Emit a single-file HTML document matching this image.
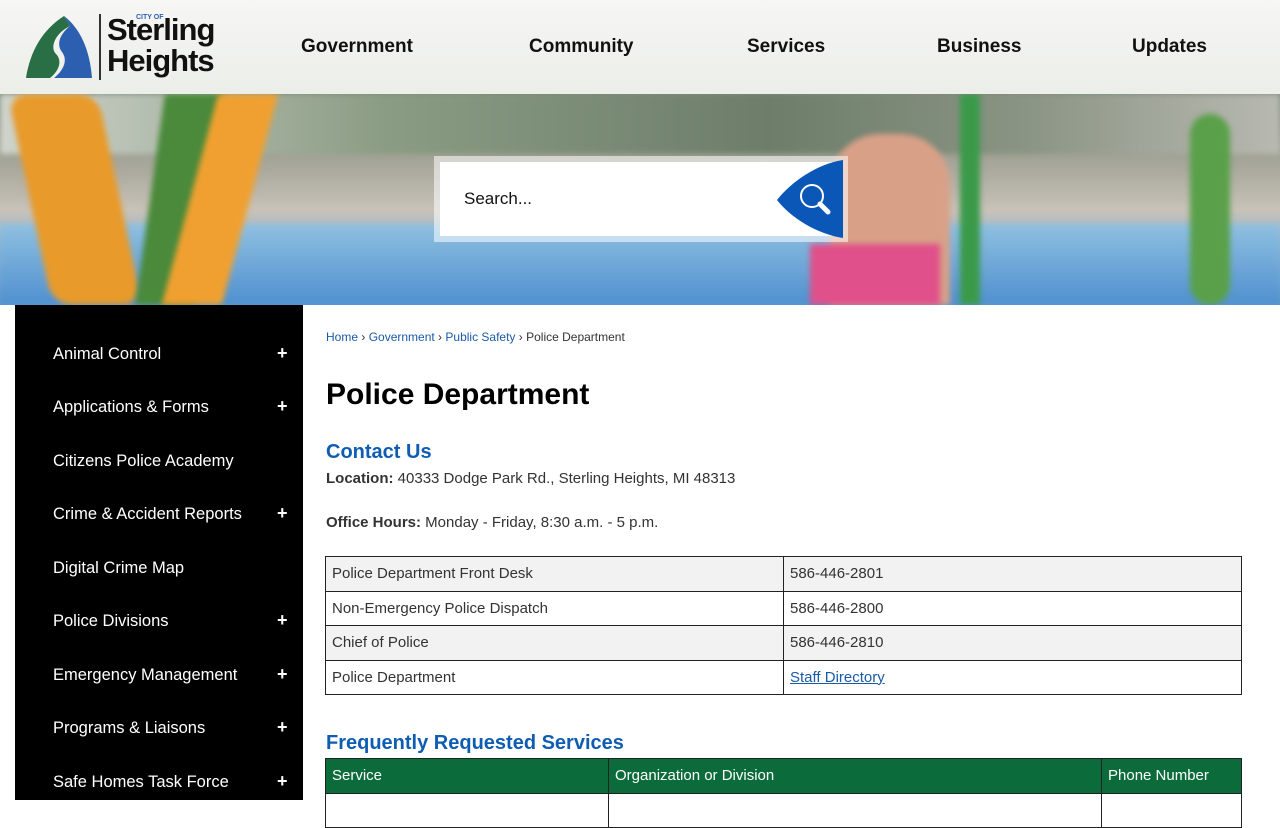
<!DOCTYPE html>
<html><head><meta charset="utf-8"><style>
*{margin:0;padding:0;box-sizing:border-box}
body{width:1280px;height:800px;overflow:hidden;background:#fff;font-family:"Liberation Sans",sans-serif;position:relative}
.hdr{position:absolute;top:0;left:0;width:1280px;height:94px;background:linear-gradient(180deg,#f6f6f4,#eceee9);z-index:3}
.nav a{position:absolute;top:36px;font-size:19px;font-weight:bold;color:#111;text-decoration:none}
.hero{position:absolute;top:94px;left:0;width:1280px;height:211px;overflow:hidden;
background:linear-gradient(180deg,#7f8a78 0%,#a9a89c 35%,#c8c2b8 55%,#8fb4d0 72%,#5d9ad0 100%)}
.hero .b{filter:blur(3px)}
.b{position:absolute}
.search{position:absolute;left:434px;top:156px;width:414px;height:86px;background:rgba(255,255,255,.55)}
.search .in{position:absolute;left:6px;top:6px;width:402px;height:74px;background:#fff}
.search span{position:absolute;left:24px;top:27px;font-size:17px;color:#111}
.side{position:absolute;left:15px;top:305px;width:288px;height:495px;background:#000}
.side div{position:absolute;left:38px;color:#fff;font-size:16.5px}
.side b{position:absolute;left:262px;color:#fff;font-size:18px;font-weight:bold}
.bc{position:absolute;top:330px;left:326px;font-size:12px;color:#333}
.bc a{color:#1a5aa8;text-decoration:none}
h1{position:absolute;top:378px;left:326px;font-size:30px;color:#000}
h2{position:absolute;left:326px;font-size:20px;color:#0f5db3}
.p{position:absolute;left:326px;font-size:15px;color:#333}
table{position:absolute;left:325px;border-collapse:collapse;font-size:15px;color:#333}
td{border:1px solid #222;padding:0 6px;height:34.5px}
tr.g td{background:#f2f2f2}
.t2 td{background:#0b6b3a;color:#fff;border-color:#222}
</style></head><body>
<div class="hero">
 <div class="b" style="left:0;top:0;width:1280px;height:60px;background:linear-gradient(90deg,#cfd4cc,#8b9c84 30%,#6d7d6a 60%,#8a9484 80%,#b8b9b0)"></div>
 <div class="b" style="left:0;top:130px;width:1280px;height:81px;background:linear-gradient(180deg,#8fc0e0,#4f90cf)"></div>
 <div class="b" style="left:30px;top:0;width:90px;height:211px;background:#e89a2a;transform:skewX(12deg);border-radius:20px"></div>
 <div class="b" style="left:150px;top:0;width:60px;height:211px;background:#4a8a3a;transform:skewX(-8deg)"></div>
 <div class="b" style="left:190px;top:0;width:60px;height:211px;background:#f0a030;transform:skewX(-15deg)"></div>
 <div class="b" style="left:830px;top:40px;width:120px;height:171px;background:#d9a088;border-radius:50px 50px 0 0"></div>
 <div class="b" style="left:810px;top:150px;width:130px;height:61px;background:#e0508a"></div>
 <div class="b" style="left:960px;top:0;width:20px;height:211px;background:#3a9a4a"></div>
 <div class="b" style="left:1190px;top:20px;width:40px;height:191px;background:#5aa04a;border-radius:20px"></div>
</div>
<div class="hdr">
 <svg style="position:absolute;left:24px;top:14px" width="70" height="66" viewBox="0 0 70 66"><path d="M2 64 C6 38 18 16 40 2 L46 12 C30 20 26 34 32 40 C38 46 36 56 26 64 Z" fill="#2a6e45"/><path d="M40 2 C56 14 66 36 68 64 L30 64 C40 56 44 46 38 38 C32 30 36 20 46 12 Z" fill="#2d5fb0"/></svg>
 <div style="position:absolute;left:99px;top:14px;width:2px;height:66px;background:#333"></div>
 <div style="position:absolute;left:136px;top:14px;font-size:7px;color:#2d5fb0;font-weight:bold">CITY OF</div>
 <div style="position:absolute;left:107px;top:14px;font-size:31px;font-weight:bold;color:#111;line-height:31px;letter-spacing:-1px">Sterling<br>Heights</div>
 <div class="nav"><a style="left:301px">Government</a><a style="left:529px">Community</a><a style="left:747px">Services</a><a style="left:937px">Business</a><a style="left:1132px">Updates</a></div>
</div>
<div class="search"><div class="in"><span>Search...</span></div>
 <svg style="position:absolute;left:343px;top:4px" width="66" height="78" viewBox="0 0 66 78"><path d="M66 0 C40 4 14 22 0 40 C14 58 40 74 66 78 Z" fill="#0b57b7"/><circle cx="35" cy="36" r="11" fill="none" stroke="#fff" stroke-width="2"/><path d="M43 44 L51 52" stroke="#fff" stroke-width="5" stroke-linecap="round"/></svg>
</div>
<div class="side">
 <div style="top:40px">Animal Control</div><b style="top:38px">+</b>
 <div style="top:93px">Applications &amp; Forms</div><b style="top:91px">+</b>
 <div style="top:147px">Citizens Police Academy</div>
 <div style="top:200px">Crime &amp; Accident Reports</div><b style="top:198px">+</b>
 <div style="top:254px">Digital Crime Map</div>
 <div style="top:307px">Police Divisions</div><b style="top:305px">+</b>
 <div style="top:361px">Emergency Management</div><b style="top:359px">+</b>
 <div style="top:414px">Programs &amp; Liaisons</div><b style="top:412px">+</b>
 <div style="top:468px">Safe Homes Task Force</div><b style="top:466px">+</b>
</div>
<div class="bc"><a>Home</a> › <a>Government</a> › <a>Public Safety</a> › Police Department</div>
<h1>Police Department</h1>
<h2 style="top:441px">Contact Us</h2>
<div class="p" style="top:470px"><b>Location:</b> 40333 Dodge Park Rd., Sterling Heights, MI 48313</div>
<div class="p" style="top:514px"><b>Office Hours:</b> Monday - Friday, 8:30 a.m. - 5 p.m.</div>
<table style="top:556px;width:917px">
<tr class="g"><td style="width:458px">Police Department Front Desk</td><td>586-446-2801</td></tr>
<tr><td>Non-Emergency Police Dispatch</td><td>586-446-2800</td></tr>
<tr class="g"><td>Chief of Police</td><td>586-446-2810</td></tr>
<tr><td>Police Department</td><td><a style="color:#1a5aa8;text-decoration:underline">Staff Directory</a></td></tr>
</table>
<h2 style="top:732px">Frequently Requested Services</h2>
<table class="t2" style="top:758px;width:917px">
<tr><td style="width:283px">Service</td><td style="width:493px">Organization or Division</td><td>Phone Number</td></tr>
<tr><td style="background:#fff">&nbsp;</td><td style="background:#fff"></td><td style="background:#fff"></td></tr>
</table>
</body></html>
